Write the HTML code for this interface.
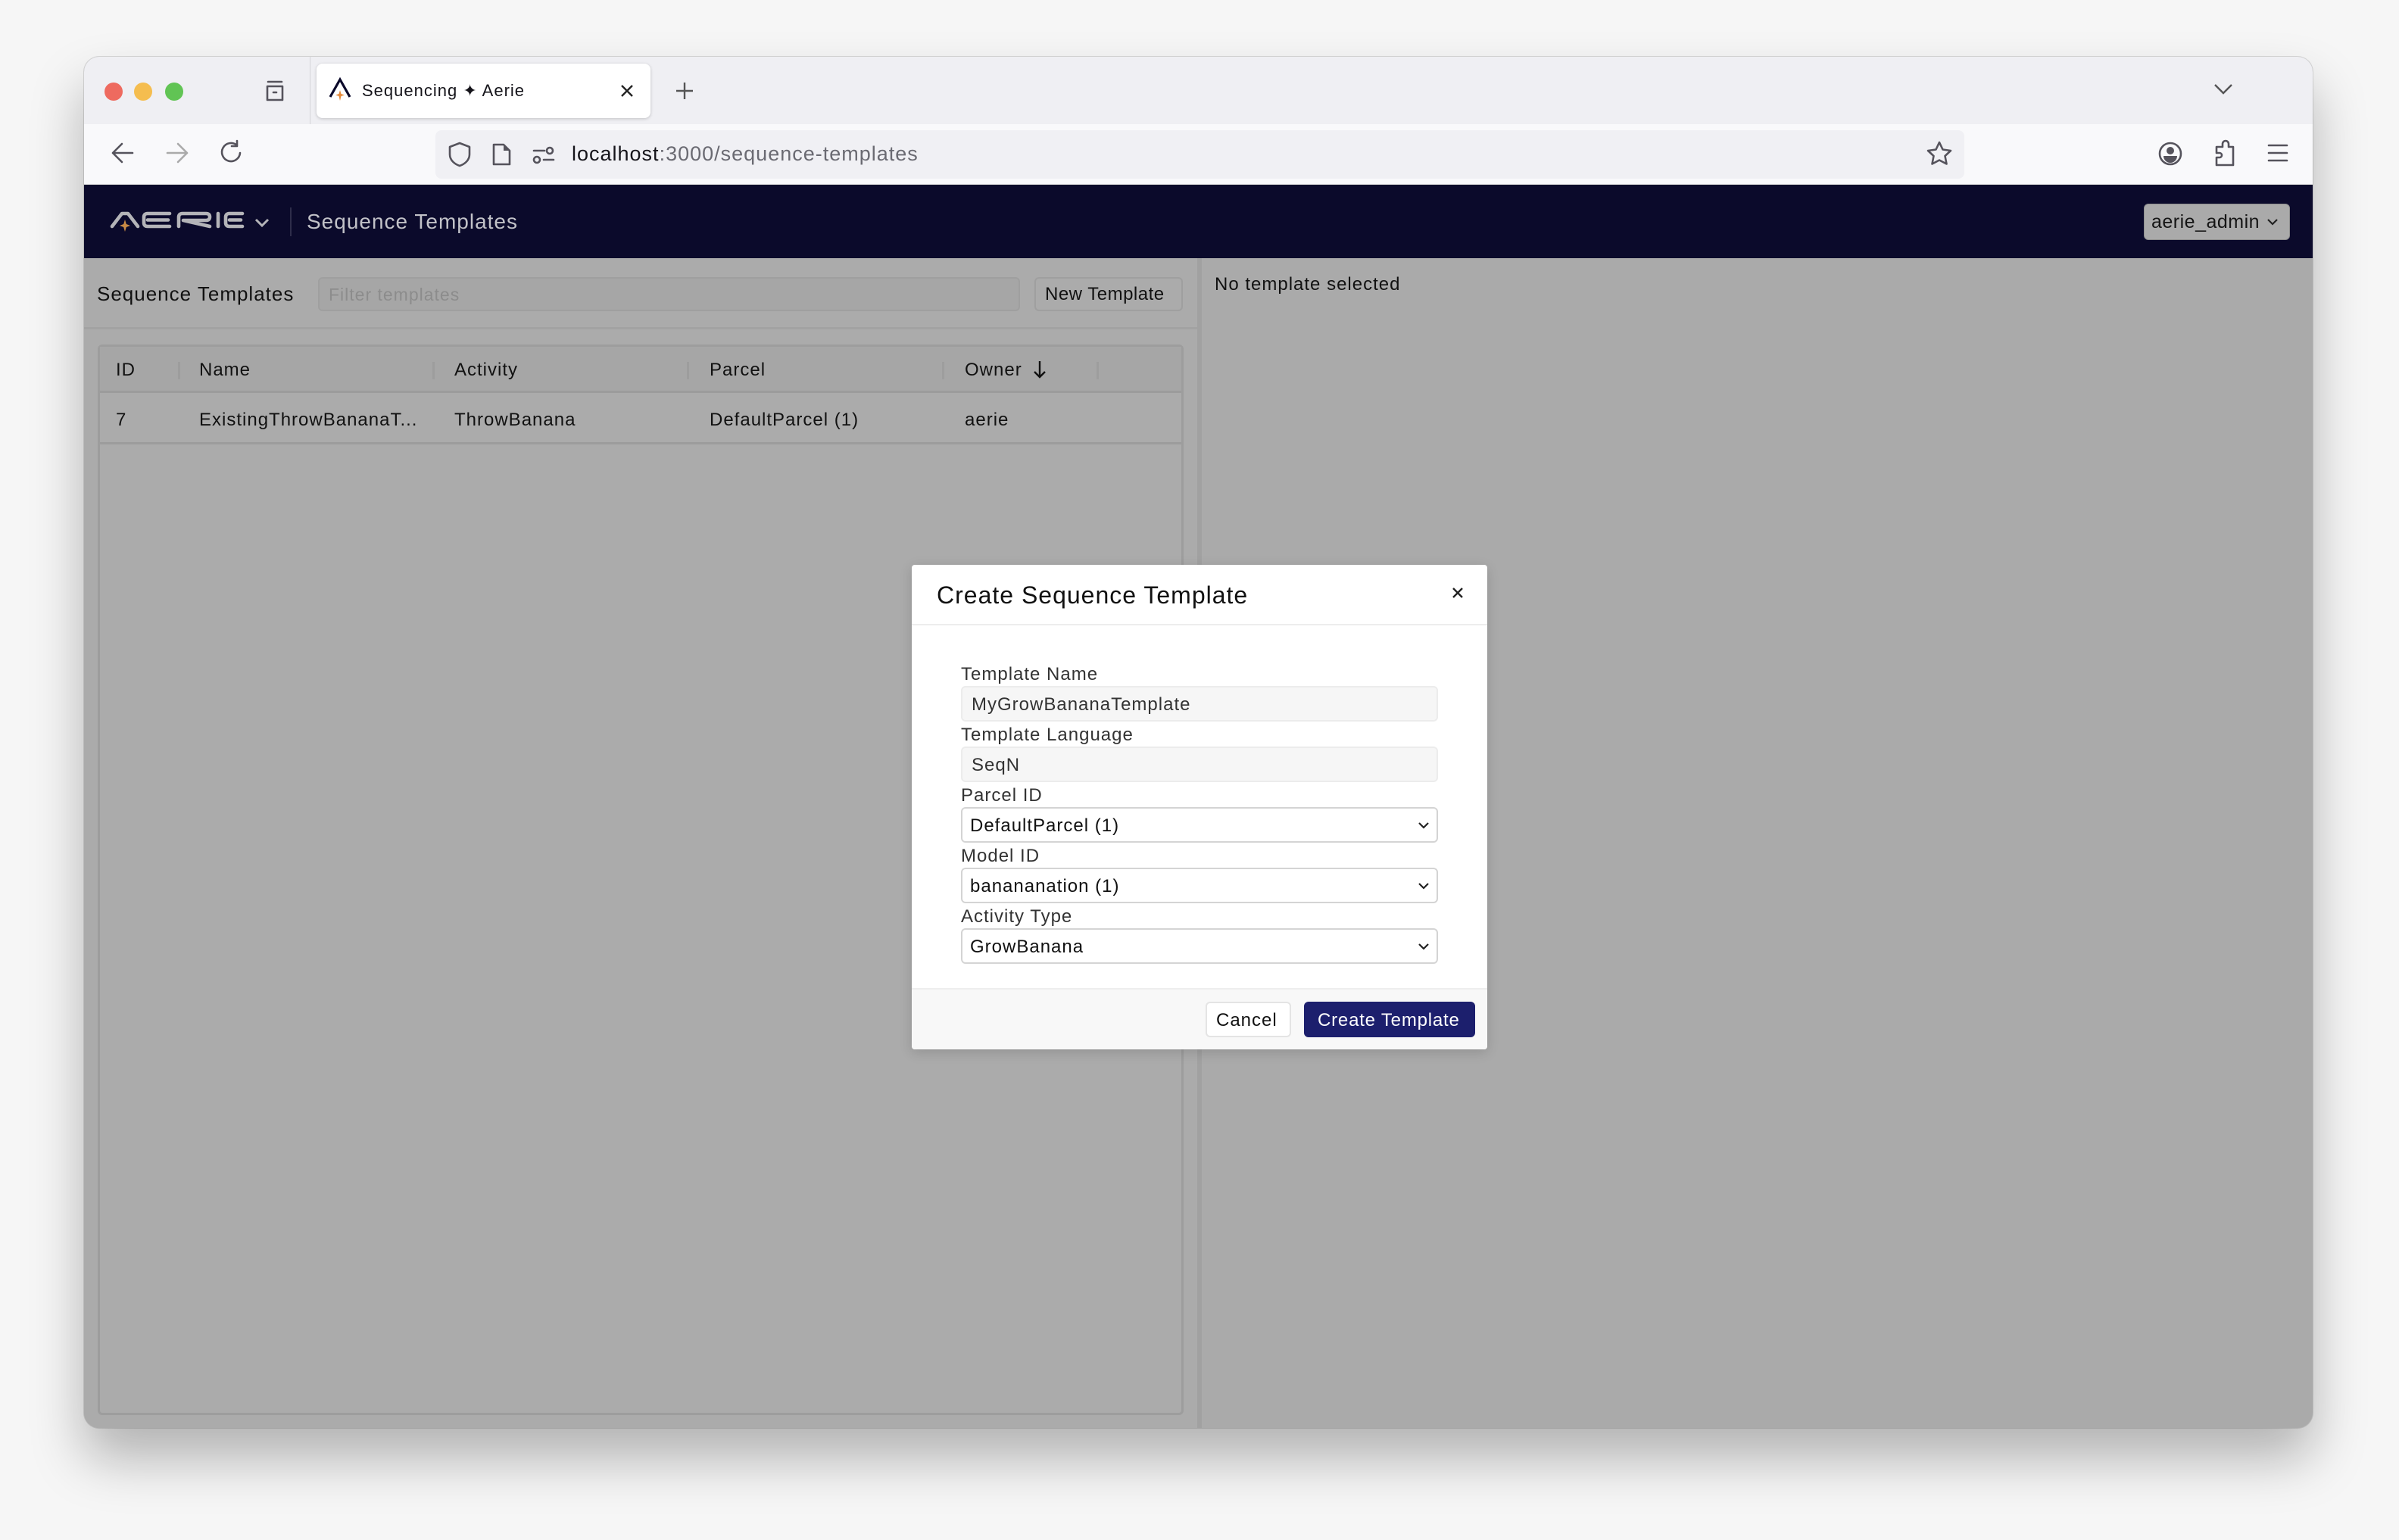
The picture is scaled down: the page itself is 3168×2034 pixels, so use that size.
<!DOCTYPE html>
<html><head><meta charset="utf-8"><style>
*{box-sizing:border-box;margin:0;padding:0}
body{width:3168px;height:2034px;background:#f6f6f6;font-family:"Liberation Sans",sans-serif;position:relative;overflow:hidden;color:#1a1a1a;letter-spacing:1px}
.abs{position:absolute}
.win{left:111px;top:75px;width:2943px;height:1811px;border-radius:20px;overflow:hidden;background:#aaa;box-shadow:0 40px 70px rgba(0,0,0,0.28),0 0 0 1px rgba(0,0,0,0.12)}
.tabbar{left:0;top:0;width:100%;height:89px;background:#efeff3}
.toolbar{left:0;top:89px;width:100%;height:80px;background:#f9f9fb;border-bottom:1px solid #ddd}
.nav{left:0;top:169px;width:100%;height:97px;background:#0b0a2b}
.dot{width:24px;height:24px;border-radius:50%;top:34px}
.txt{white-space:nowrap}
.ico{stroke:#55535c;fill:none;stroke-width:2.6;stroke-linecap:round;stroke-linejoin:round}
</style></head><body>
<div class="abs win">
 <div class="abs tabbar">
  <div class="abs dot" style="left:27px;background:#ee6a5f"></div>
  <div class="abs dot" style="left:66px;background:#f5bd4f"></div>
  <div class="abs dot" style="left:107px;background:#61c454"></div>
  <svg class="abs" style="left:238px;top:30px" width="28" height="30"><path class="ico" d="M5 3H23M4 9H24V27H4Z M12 17H16"/></svg>
  <div class="abs" style="left:298px;top:0;width:1px;height:89px;background:#d4d4d8"></div>
  <div class="abs" style="left:307px;top:9px;width:441px;height:72px;background:#fff;border-radius:8px;box-shadow:0 1px 4px rgba(0,0,0,0.2)"></div>
  <svg class="abs" style="left:322px;top:27px" width="34" height="36"><path d="M3 26L16 3L29 26" stroke="#0b0a2b" stroke-width="3.2" fill="none"/><path d="M16 17L17.5 22L22 23.5L17.5 25L16 31L14.5 25L10 23.5L14.5 22Z" fill="#e58a3b"/></svg>
  <div class="abs txt" style="left:367px;top:32px;font-size:22px;color:#15141a">Sequencing ✦ Aerie</div>
  <svg class="abs" style="left:707px;top:35px" width="20" height="20"><path d="M3 3L17 17M17 3L3 17" stroke="#222" stroke-width="2.4"/></svg>
  <svg class="abs" style="left:780px;top:32px" width="26" height="26"><path d="M13 2V24M2 13H24" stroke="#555" stroke-width="2.4"/></svg>
  <svg class="abs" style="left:2812px;top:35px" width="26" height="16"><path d="M2 2L13 13L24 2" stroke="#555" stroke-width="2.4" fill="none"/></svg>
 </div>
 <div class="abs toolbar">
  <svg class="abs" style="left:34px;top:22px" width="34" height="32"><path class="ico" d="M30 16H4M16 4L4 16L16 28"/></svg>
  <svg class="abs" style="left:106px;top:22px" width="34" height="32"><path class="ico" style="stroke:#aaa" d="M4 16H30M18 4L30 16L18 28"/></svg>
  <svg class="abs" style="left:177px;top:20px" width="34" height="36"><path class="ico" d="M25 8A12 12 0 1 0 29 18M25 2V9H18"/></svg>
  <div class="abs" style="left:464px;top:8px;width:2019px;height:64px;background:#f0f0f4;border-radius:8px"></div>
  <svg class="abs" style="left:479px;top:22px" width="34" height="36"><path class="ico" d="M17 3L30 8V18C30 26 23 31 17 33C11 31 4 26 4 18V8Z"/></svg>
  <svg class="abs" style="left:537px;top:24px" width="28" height="32"><path class="ico" d="M4 3H17L25 11V29H4Z"/><path d="M17 3L25 11H17Z" fill="#55535c"/></svg>
  <svg class="abs" style="left:591px;top:29px" width="32" height="24"><path class="ico" d="M3 6H17M16 18H29"/><circle class="ico" cx="24" cy="6" r="4"/><circle class="ico" cx="7" cy="18" r="4"/></svg>
  <div class="abs txt" style="left:644px;top:24px;font-size:27px;color:#15141a">localhost<span style="color:#6a6a72">:3000/sequence-templates</span></div>
  <svg class="abs" style="left:2432px;top:21px" width="36" height="36"><path class="ico" d="M18 3L22.5 12.5L33 14L25.5 21L27.5 31.5L18 26.5L8.5 31.5L10.5 21L3 14L13.5 12.5Z"/></svg>
  <svg class="abs" style="left:2738px;top:22px" width="34" height="34"><circle class="ico" cx="17" cy="17" r="14"/><circle cx="17" cy="13" r="5" fill="#55535c"/><path d="M8 20H26A9 9 0 0 1 8 20Z" fill="#55535c"/></svg>
  <svg class="abs" style="left:2810px;top:20px" width="34" height="38"><path class="ico" d="M6 34V24H10A3 3 0 0 0 10 18H6V10H14V6A4 4 0 0 1 22 6V10H28V34Z"/></svg>
  <svg class="abs" style="left:2882px;top:24px" width="30" height="28"><path class="ico" d="M3 4H27M3 14H27M3 24H27"/></svg>
 </div>
 <div class="abs nav">
  <svg class="abs" style="left:34px;top:34px" width="182" height="28" viewBox="0 0 182 28">
   <g stroke="#b4b4b8" stroke-width="4.6" fill="none" stroke-linecap="round" stroke-linejoin="round">
    <path d="M3 21L16 4H24L37 21"/>
    <path d="M79 4H50Q45 4 45 9V16Q45 21 50 21H79M50 12.5H77"/>
    <path d="M91 21V9Q91 4 96 4H127Q132 4 132 8.5Q132 13 127 13H97L132 21"/>
    <path d="M143 4V21"/>
    <path d="M175 4H158Q153 4 153 9V16Q153 21 158 21H175M158 12.5H173"/>
   </g>
   <path d="M20 12L21.8 18L27 20L21.8 22L20 28L18.2 22L13 20L18.2 18Z" fill="#c98a45"/>
  </svg>
  <svg class="abs" style="left:224px;top:43px" width="22" height="14"><path d="M3 3L11 11L19 3" stroke="#b4b4b8" stroke-width="3" fill="none"/></svg>
  <div class="abs" style="left:272px;top:30px;width:2px;height:38px;background:#2e2d4a"></div>
  <div class="abs txt" style="left:294px;top:33px;font-size:28px;color:#c2c2c8">Sequence Templates</div>
  <div class="abs" style="left:2720px;top:25px;width:193px;height:48px;background:#aaa;border:1px solid #8e8e8e;border-radius:6px"></div>
  <div class="abs txt" style="left:2730px;top:35px;font-size:25px;color:#151515;letter-spacing:0.5px">aerie_admin</div>
  <svg class="abs" style="left:2882px;top:44px" width="16" height="12"><path d="M2 2L8 8L14 2" stroke="#222" stroke-width="2.2" fill="none"/></svg>
 </div>
 <div class="abs" style="left:0;top:266px;width:1470px;height:1545px;background:#ababab"></div>
 <div class="abs" style="left:1470px;top:266px;width:6px;height:1545px;background:#a1a1a1"></div>
 <div class="abs txt" style="left:17px;top:298px;font-size:26px;color:#111">Sequence Templates</div>
 <div class="abs" style="left:309px;top:291px;width:927px;height:45px;background:#a6a6a6;border:2px solid #9f9f9f;border-radius:6px"></div>
 <div class="abs txt" style="left:323px;top:301px;font-size:23px;color:#8c8c8c">Filter templates</div>
 <div class="abs" style="left:1255px;top:291px;width:196px;height:45px;border:2px solid #9f9f9f;border-radius:6px"></div>
 <div class="abs txt" style="left:1269px;top:300px;font-size:24px;color:#111;letter-spacing:0.5px">New Template</div>
 <div class="abs" style="left:0;top:357px;width:1470px;height:3px;background:#a2a2a2"></div>
 <div class="abs" style="left:18px;top:380px;width:1434px;height:1414px;border:3px solid #9d9d9d;border-radius:6px"></div>
 <div class="abs" style="left:21px;top:383px;width:1428px;height:61px;background:#a6a6a6;border-bottom:3px solid #9c9c9c"></div>
 <div class="abs" style="left:21px;top:509px;width:1428px;height:3px;background:#9c9c9c"></div>
 <div class="abs" style="left:124px;top:403px;width:3px;height:23px;background:#9d9d9d"></div>
 <div class="abs" style="left:460px;top:403px;width:3px;height:23px;background:#9d9d9d"></div>
 <div class="abs" style="left:796px;top:403px;width:3px;height:23px;background:#9d9d9d"></div>
 <div class="abs" style="left:1133px;top:403px;width:3px;height:23px;background:#9d9d9d"></div>
 <div class="abs" style="left:1337px;top:403px;width:3px;height:23px;background:#9d9d9d"></div>
 <div style="font-size:24px;color:#111">
  <div class="abs txt" style="left:42px;top:400px">ID</div>
  <div class="abs txt" style="left:152px;top:400px">Name</div>
  <div class="abs txt" style="left:489px;top:400px">Activity</div>
  <div class="abs txt" style="left:826px;top:400px">Parcel</div>
  <div class="abs txt" style="left:1163px;top:400px">Owner</div>
  <svg class="abs" style="left:1252px;top:400px" width="20" height="26"><path d="M10 2V23M3 16L10 23L17 16" stroke="#111" stroke-width="2.4" fill="none"/></svg>
  <div class="abs txt" style="left:42px;top:466px">7</div>
  <div class="abs txt" style="left:152px;top:466px">ExistingThrowBananaT...</div>
  <div class="abs txt" style="left:489px;top:466px">ThrowBanana</div>
  <div class="abs txt" style="left:826px;top:466px">DefaultParcel (1)</div>
  <div class="abs txt" style="left:1163px;top:466px">aerie</div>
 </div>
 <div class="abs txt" style="left:1493px;top:287px;font-size:24px;color:#111">No template selected</div>
 <div class="abs" style="left:1093px;top:671px;width:760px;height:640px;background:#fff;border-radius:4px;overflow:hidden;box-shadow:0 4px 16px rgba(0,0,0,0.15)">
  <div class="abs txt" style="left:33px;top:22px;font-size:32px;color:#111">Create Sequence Template</div>
  <svg class="abs" style="left:712px;top:28px" width="18" height="18"><path d="M3 3L15 15M15 3L3 15" stroke="#222" stroke-width="2.4"/></svg>
  <div class="abs" style="left:0;top:78px;width:100%;height:2px;background:#ededed"></div>
  <div class="abs txt" style="left:65px;top:131px;font-size:24px;color:#333">Template Name</div>
  <div class="abs" style="left:65px;top:160px;width:630px;height:47px;background:#f6f6f6;border:2px solid #ececec;border-radius:6px"></div>
  <div class="abs txt" style="left:79px;top:171px;font-size:24px;color:#333">MyGrowBananaTemplate</div>
  <div class="abs txt" style="left:65px;top:211px;font-size:24px;color:#333">Template Language</div>
  <div class="abs" style="left:65px;top:240px;width:630px;height:47px;background:#f6f6f6;border:2px solid #ececec;border-radius:6px"></div>
  <div class="abs txt" style="left:79px;top:251px;font-size:24px;color:#333">SeqN</div>
  <div class="abs txt" style="left:65px;top:291px;font-size:24px;color:#333">Parcel ID</div>
  <div class="abs" style="left:65px;top:320px;width:630px;height:47px;background:#fff;border:2px solid #d4d4d4;border-radius:6px"></div>
  <div class="abs txt" style="left:77px;top:331px;font-size:24px;color:#111">DefaultParcel (1)</div>
  <div class="abs txt" style="left:65px;top:371px;font-size:24px;color:#333">Model ID</div>
  <div class="abs" style="left:65px;top:400px;width:630px;height:47px;background:#fff;border:2px solid #d4d4d4;border-radius:6px"></div>
  <div class="abs txt" style="left:77px;top:411px;font-size:24px;color:#111">banananation (1)</div>
  <div class="abs txt" style="left:65px;top:451px;font-size:24px;color:#333">Activity Type</div>
  <div class="abs" style="left:65px;top:480px;width:630px;height:47px;background:#fff;border:2px solid #d4d4d4;border-radius:6px"></div>
  <div class="abs txt" style="left:77px;top:491px;font-size:24px;color:#111">GrowBanana</div>
  <svg class="abs" style="left:668px;top:338px" width="16" height="12"><path d="M2 3L8 9L14 3" stroke="#222" stroke-width="2.2" fill="none"/></svg>
  <svg class="abs" style="left:668px;top:418px" width="16" height="12"><path d="M2 3L8 9L14 3" stroke="#222" stroke-width="2.2" fill="none"/></svg>
  <svg class="abs" style="left:668px;top:498px" width="16" height="12"><path d="M2 3L8 9L14 3" stroke="#222" stroke-width="2.2" fill="none"/></svg>
  <div class="abs" style="left:0;top:559px;width:100%;height:81px;background:#f8f8f8;border-top:2px solid #eeeeee"></div>
  <div class="abs" style="left:388px;top:577px;width:113px;height:47px;background:#fff;border:2px solid #e4e4e4;border-radius:6px"></div>
  <div class="abs txt" style="left:402px;top:588px;font-size:24px;color:#111">Cancel</div>
  <div class="abs" style="left:518px;top:577px;width:226px;height:47px;background:#1c1f6d;border-radius:6px"></div>
  <div class="abs txt" style="left:536px;top:588px;font-size:24px;color:#fff;letter-spacing:0.8px">Create Template</div>
 </div>
</div>
</body></html>
